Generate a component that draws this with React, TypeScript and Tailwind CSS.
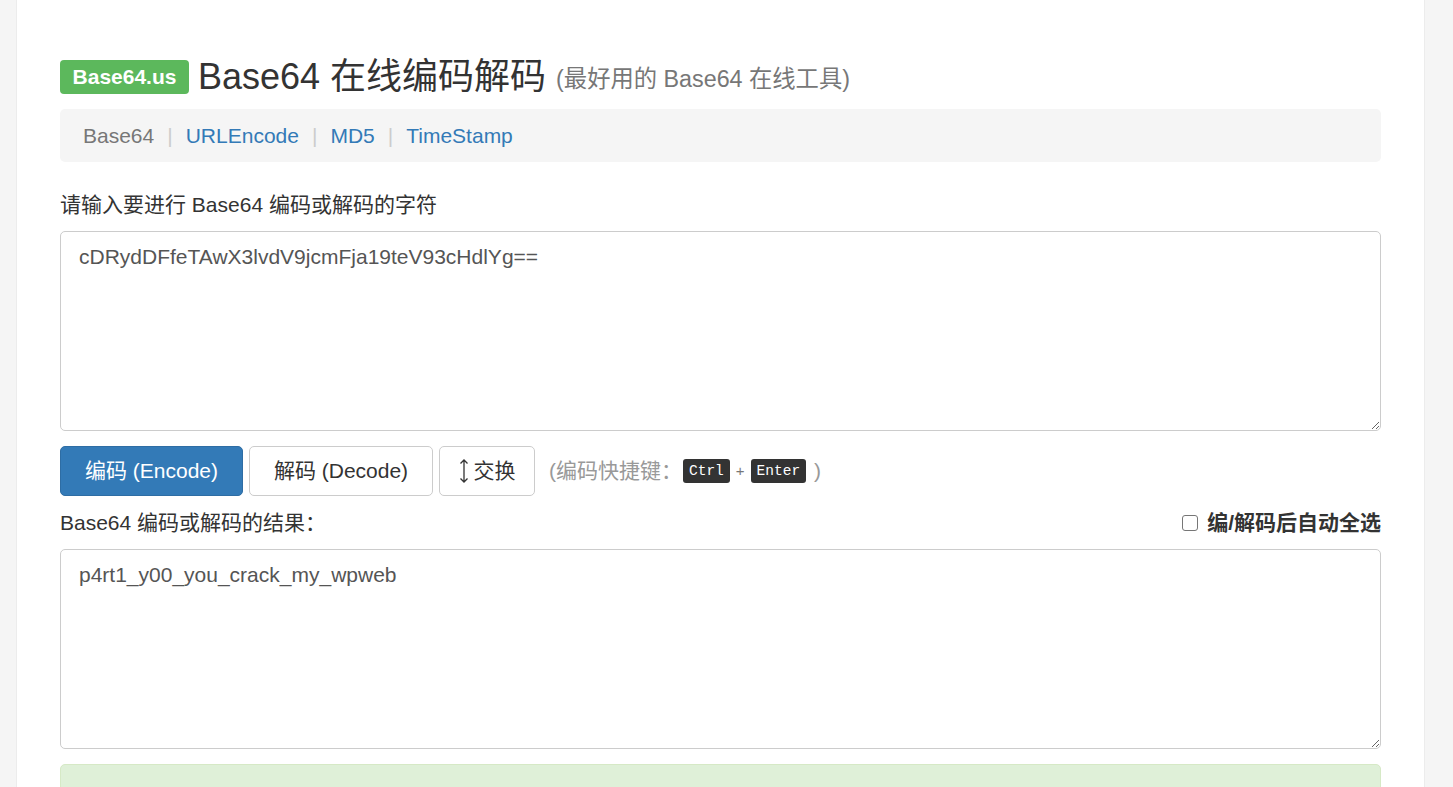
import React from "react";

const font = { fontFamily: '"Liberation Sans", Arial, "Noto Sans CJK SC", sans-serif' };

const links = [
  { label: "Base64", active: true },
  { label: "URLEncode" },
  { label: "MD5" },
  { label: "TimeStamp" },
];

function Kbd({ children }: { children: React.ReactNode }) {
  return (
    <kbd className="inline-flex h-[24px] items-center rounded-[3px] bg-[#333] px-[6px] font-['Liberation_Mono',monospace] text-[14.5px] leading-none text-white">
      {children}
    </kbd>
  );
}

export default function App() {
  return (
    <div className="min-h-screen bg-[#f5f5f5] text-[#333]" style={font}>
      <div className="ml-[16px] min-h-screen w-[1409px] border-x border-[#ececec] bg-white px-[43px] pt-[57px]">
        <h1 className="flex h-[40px] items-center">
          <span className="mr-[9px] inline-flex h-[34px] w-[129px] items-center justify-center rounded-[4px] bg-[#5cb85c] text-[21px] font-bold text-white">
            Base64.us
          </span>
          <span className="text-[36px] leading-none text-[#333]">Base64 在线编码解码</span>
          <span className="ml-[10px] mt-[4px] text-[23.3px] text-[#777]">(最好用的 Base64 在线工具)</span>
        </h1>

        <nav className="mt-[12px] flex h-[53px] items-center rounded-[5px] bg-[#f5f5f5] px-[23px] text-[21px]">
          {links.map((l, i) => (
            <React.Fragment key={l.label}>
              {i > 0 && <span className="mx-[13px] text-[#ccc]">|</span>}
              <span className={l.active ? "text-[#777]" : "text-[#337ab7]"}>{l.label}</span>
            </React.Fragment>
          ))}
        </nav>

        <label className="mt-[29px] block h-[28px] text-[21px] leading-[28px]">
          请输入要进行 Base64 编码或解码的字符
        </label>
        <textarea
          className="mt-[12px] block h-[200px] w-full resize-y rounded-[5px] border border-[#ccc] px-[18px] pt-[10px] text-[21px] leading-[30px] text-[#555] outline-none"
          defaultValue="cDRydDFfeTAwX3lvdV9jcmFja19teV93cHdlYg=="
        />

        <div className="mt-[15px] flex h-[50px] items-center gap-[6px] text-[21px]">
          <button className="h-full w-[183px] rounded-[5px] border border-[#2e6da4] bg-[#337ab7] text-white">
            编码 (Encode)
          </button>
          <button className="h-full w-[184px] rounded-[5px] border border-[#ccc] bg-white">
            解码 (Decode)
          </button>
          <button className="flex h-full w-[96px] items-center justify-center gap-[5px] rounded-[5px] border border-[#ccc] bg-white">
            <svg width="10" height="26" viewBox="0 0 10 26" fill="none" stroke="#333" strokeWidth="1.3">
              <path d="M5 2v22M1.5 5.5L5 2l3.5 3.5M1.5 20.5L5 24l3.5-3.5" />
            </svg>
            交换
          </button>
          <span className="ml-[8px] flex items-center text-[#999]">
            <span>(编码快捷键：</span>
            <span className="ml-[1px] flex items-center">
              <Kbd>Ctrl</Kbd>
            </span>
            <span className="mx-[6px] text-[15px] text-[#777]">+</span>
            <Kbd>Enter</Kbd>
            <span className="ml-[8px]">)</span>
          </span>
        </div>

        <div className="mt-[13px] flex h-[28px] items-center justify-between text-[21px]">
          <span>Base64 编码或解码的结果：</span>
          <label className="flex items-center gap-[9px] font-bold">
            <span className="h-4 w-4 rounded-[3px] border border-[#767676] bg-white" />
            编/解码后自动全选
          </label>
        </div>
        <textarea
          className="mt-[12px] block h-[200px] w-full resize-y rounded-[5px] border border-[#ccc] px-[18px] pt-[10px] text-[21px] leading-[30px] text-[#555] outline-none"
          defaultValue="p4rt1_y00_you_crack_my_wpweb"
        />

        <div className="mt-[15px] h-[70px] rounded-[5px] border border-[#d6e9c6] bg-[#dff0d8]" />
      </div>
    </div>
  );
}
